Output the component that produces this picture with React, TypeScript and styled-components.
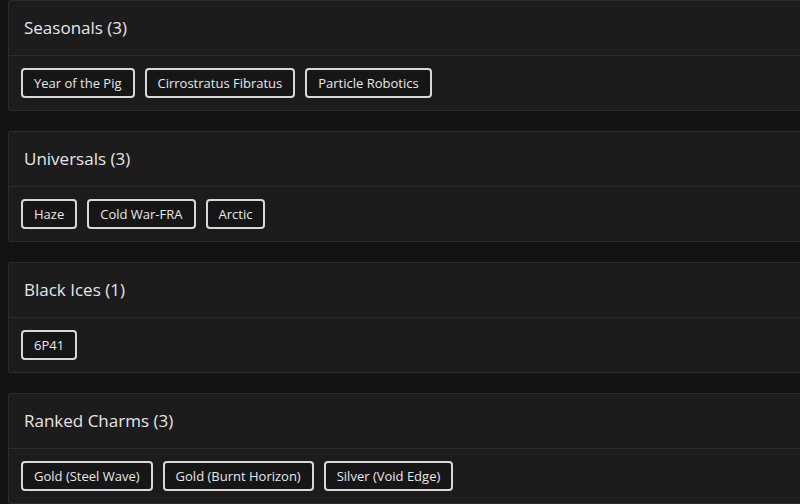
import React from "react";
import styled, { createGlobalStyle } from "styled-components";

const GlobalStyle = createGlobalStyle`
    html, body {
        margin: 0;
        padding: 0;
        background: #131313;
        overflow: hidden;
    }
    body {
        font-family: "Open Sans", "DejaVu Sans", sans-serif;
    }
`;

const Page = styled.div`
    width: 840px;
    padding: 0 0 0 8px;
    display: flex;
    flex-direction: column;
    gap: 20px;
`;

const Card = styled.section`
    background: #1c1c1c;
    border: 1px solid #2c2c2c;
    border-radius: 2px;
`;

const CardHeader = styled.div`
    height: 55px;
    display: flex;
    align-items: center;
    padding: 0 15px 2px;
    box-sizing: border-box;
    border-bottom: 1px solid #2c2c2c;
`;

const Title = styled.h3`
    margin: 0;
    font-size: 17px;
    font-weight: 500;
    color: #e6e6e6;
`;

const CardBody = styled.div`
    display: flex;
    flex-wrap: wrap;
    gap: 10px;
    padding: 12px;
`;

const Chip = styled.span`
    display: inline-flex;
    align-items: center;
    height: 30px;
    box-sizing: border-box;
    padding: 0 11px;
    border: 2px solid #d8d8d8;
    border-radius: 4px;
    background: #161616;
    color: #e8e8e8;
    font-size: 13px;
    white-space: nowrap;
`;

interface Group {
    name: string;
    items: string[];
}

const groups: Group[] = [
    { name: "Seasonals", items: ["Year of the Pig", "Cirrostratus Fibratus", "Particle Robotics"] },
    { name: "Universals", items: ["Haze", "Cold War-FRA", "Arctic"] },
    { name: "Black Ices", items: ["6P41"] },
    { name: "Ranked Charms", items: ["Gold (Steel Wave)", "Gold (Burnt Horizon)", "Silver (Void Edge)"] },
];

export default function App() {
    return (
        <>
            <GlobalStyle />
            <Page>
                {groups.map(group => (
                    <Card key={group.name}>
                        <CardHeader>
                            <Title>{`${group.name} (${group.items.length})`}</Title>
                        </CardHeader>
                        <CardBody>
                            {group.items.map(item => (
                                <Chip key={item}>{item}</Chip>
                            ))}
                        </CardBody>
                    </Card>
                ))}
            </Page>
        </>
    );
}
